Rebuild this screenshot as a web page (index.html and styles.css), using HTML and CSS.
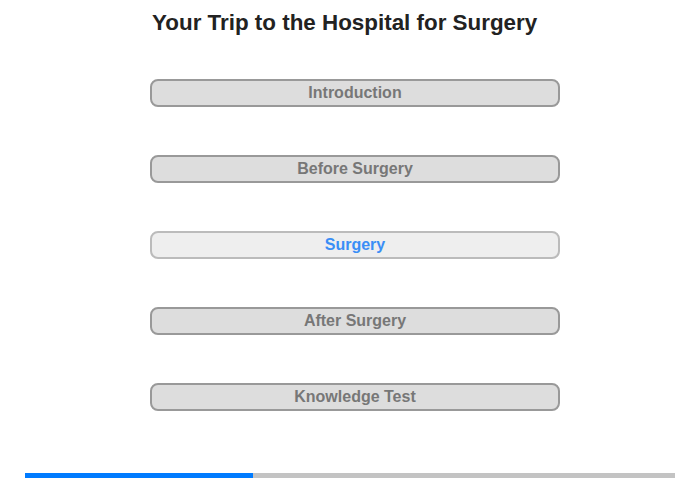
FILE: index.html
```html
<!DOCTYPE html>
<html lang="en">
<head>
	<meta charset="UTF-8">
	<title>Your Trip to the Hospital for Surgery</title>
	<link rel="stylesheet" href="styles.css">
</head>
<body>
	<div id="page">
		<h1 class="title">Your Trip to the Hospital for Surgery</h1>
		<ul class="menu">
			<li><a href="javascript:;">Introduction</a></li>
			<li><a href="javascript:;">Before Surgery</a></li>
			<li><a href="javascript:;" class="active">Surgery</a></li>
			<li><a href="javascript:;">After Surgery</a></li>
			<li><a href="javascript:;">Knowledge Test</a></li>
		</ul>
		<div class="progress">
			<div class="progress-bar" style="width: 35%"></div>
		</div>
	</div>
</body>
</html>
```

FILE: styles.css
```css
* {
	margin: 0;
	padding: 0;
	box-sizing: border-box;
}
body {
	font-family: "Liberation Sans", Arial, sans-serif;
	background: #fff;
}
li {
	list-style: none;
}
a {
	text-decoration: none;
}
#page {
	width: 700px;
	height: 480px;
	display: flex;
	flex-direction: column;
}
.title {
	font-size: 22.4px;
	line-height: 26px;
	font-weight: bold;
	color: #222;
	padding: 10px 0 0 152px;
}
.menu {
	display: flex;
	flex-direction: column;
	gap: 48px;
	margin: 43px 0 0 150px;
	width: 410px;
}
.menu li a {
	display: block;
	height: 28px;
	line-height: 24px;
	border: 2px solid #999;
	border-radius: 8px;
	background: #ddd;
	color: #777;
	font-size: 16px;
	font-weight: bold;
	text-align: center;
}
.menu li a.active {
	background: #eee;
	border-color: #bbb;
	color: #3a8ef6;
}
.progress {
	margin: 62px 0 0 25px;
	width: 650px;
	height: 5px;
	background: #c3c3c3;
}
.progress-bar {
	height: 100%;
	background: #007bff;
}
```
